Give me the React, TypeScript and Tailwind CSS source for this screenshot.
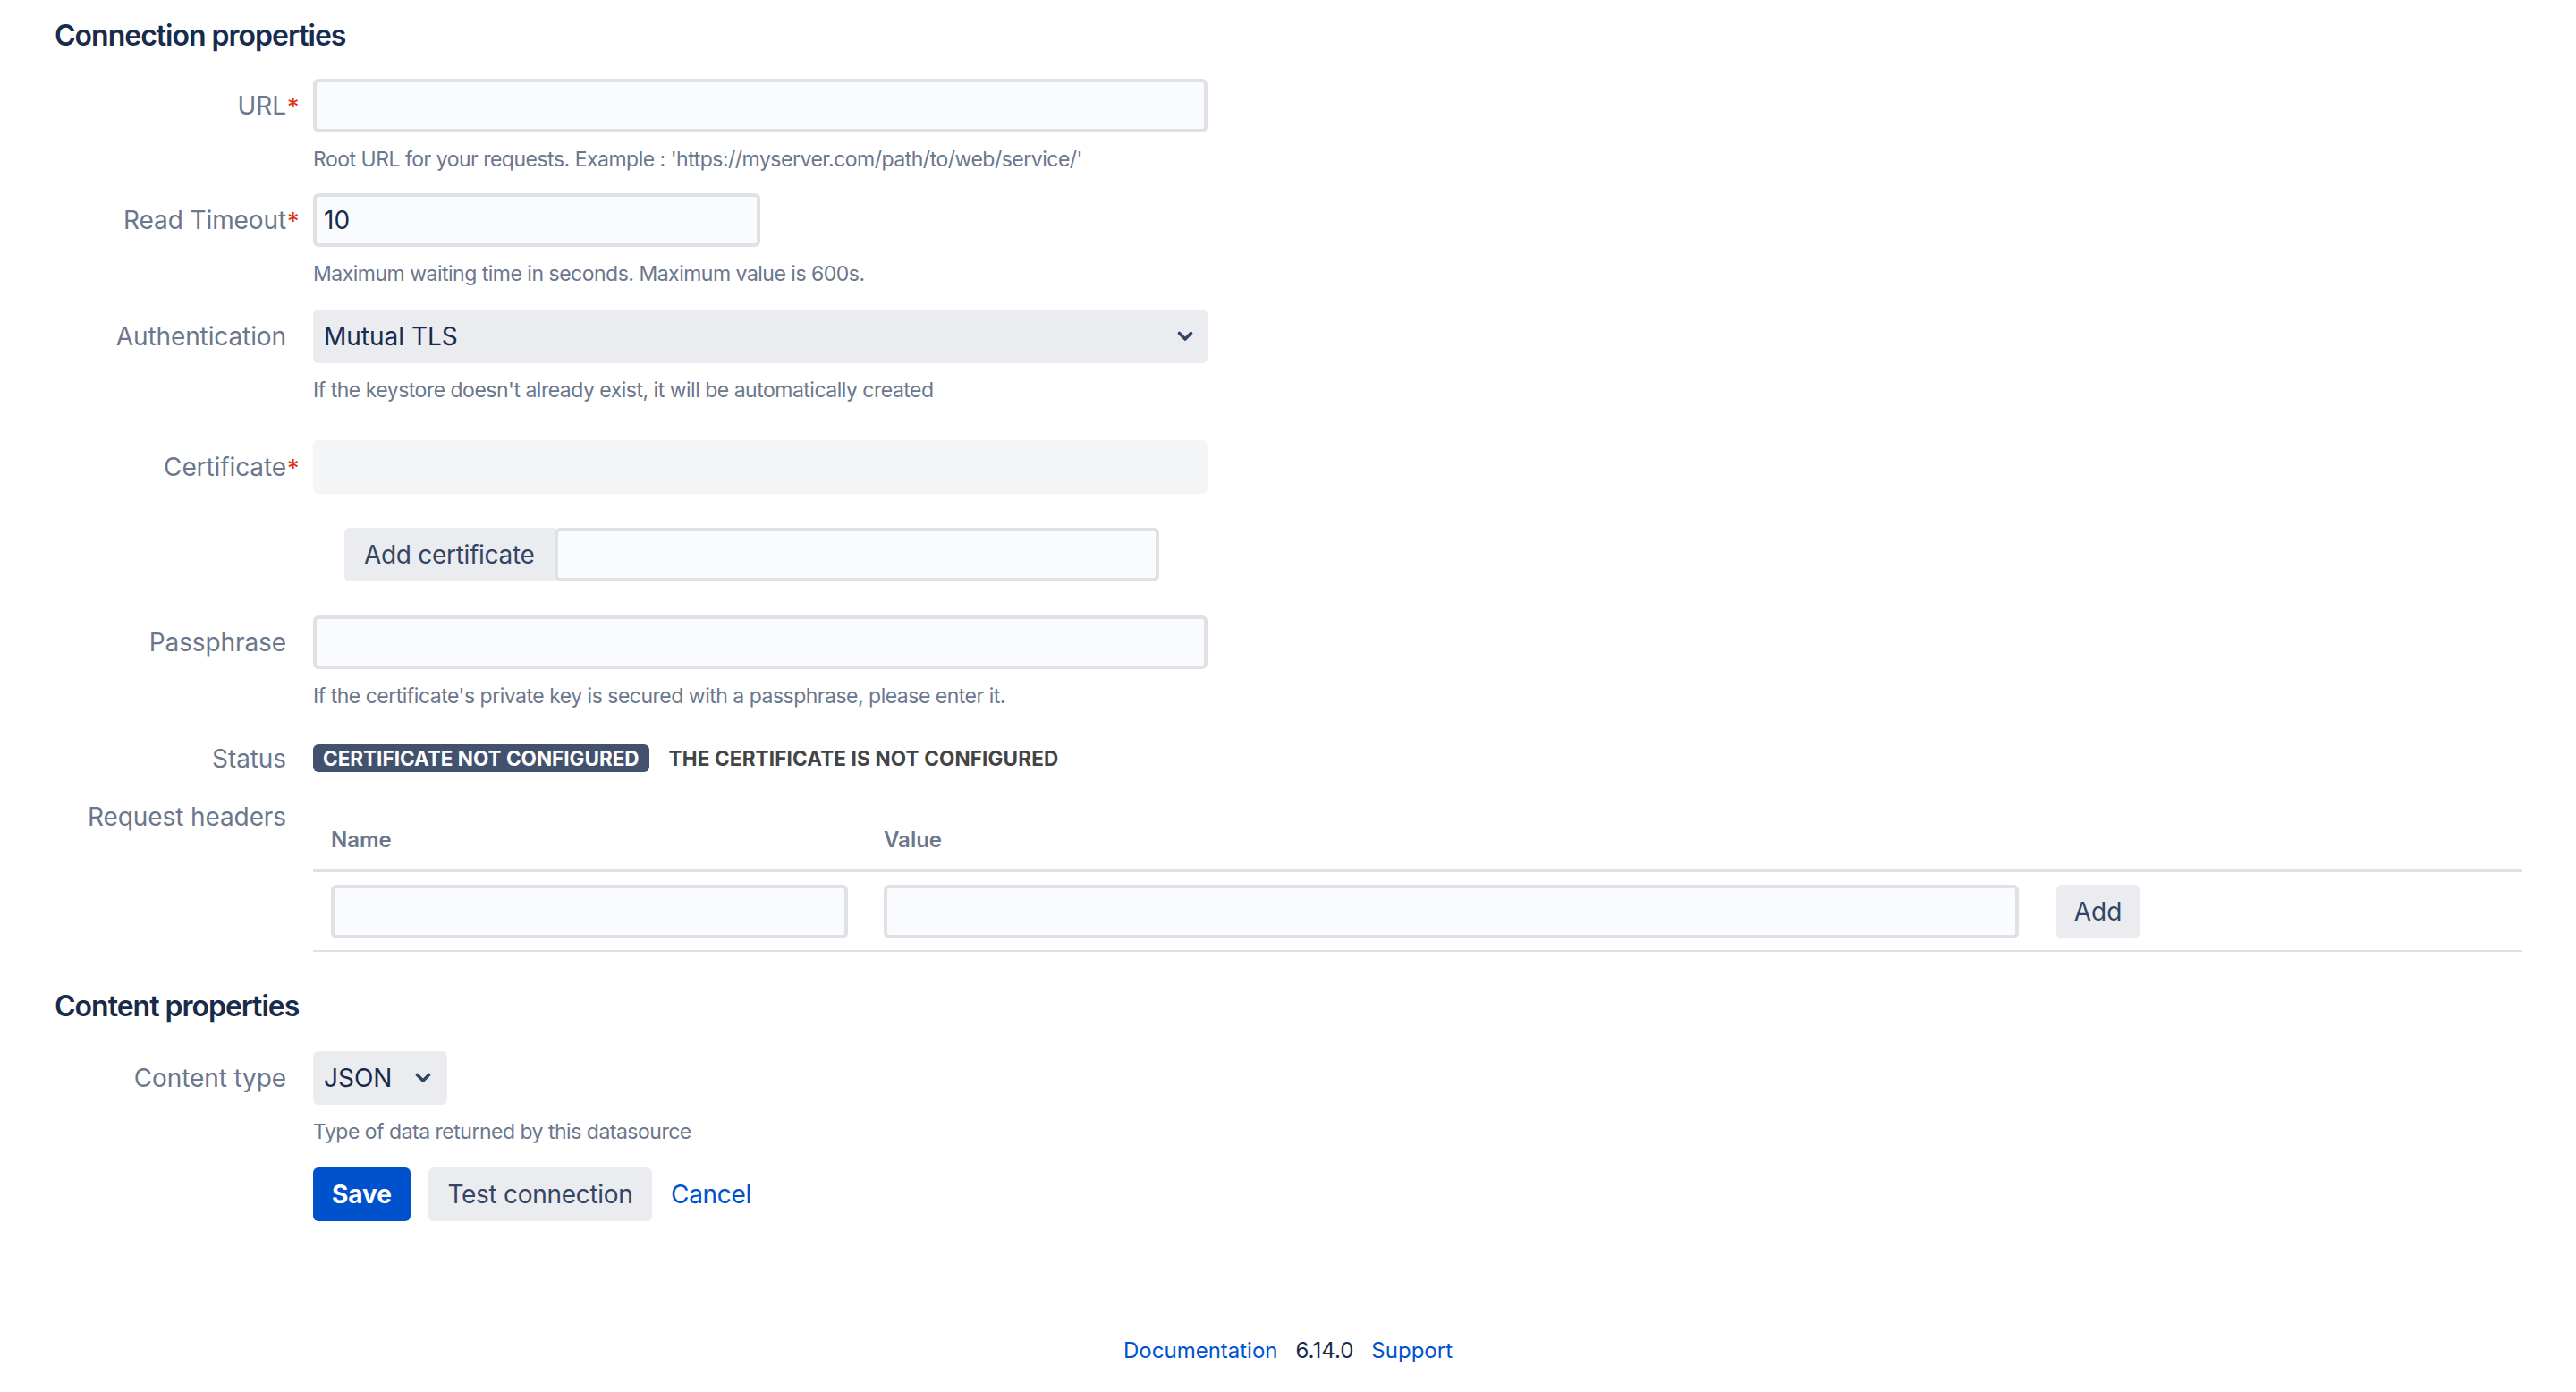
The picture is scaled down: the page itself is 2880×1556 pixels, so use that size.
import type { ReactNode } from "react";

const inputCls =
  "h-[60px] rounded-[6px] border-[4px] border-[#dfe1e6] bg-[#fafbfc] px-[8px] text-[28px] text-[#172b4d] outline-none";

function Chevron() {
  return (
    <svg width="18" height="12" viewBox="0 0 18 12" className="shrink-0">
      <polyline
        points="2.5,2.5 9,9 15.5,2.5"
        fill="none"
        stroke="#344563"
        strokeWidth="3.6"
        strokeLinecap="round"
        strokeLinejoin="round"
      />
    </svg>
  );
}

function Field({
  label,
  required,
  children,
  className,
}: {
  label?: string;
  required?: boolean;
  children: ReactNode;
  className?: string;
}) {
  return (
    <div className={"flex items-center " + (className ?? "")}>
      <div className="w-[320px] shrink-0 text-right">
        <span className="relative text-[28px] leading-[40px] tracking-[-0.1px] text-[#6b778c]">
          {label}
          {required && (
            <span className="absolute left-full top-[-1px] pl-[1px] text-[27px] leading-[40px] text-[#de350b]">
              *
            </span>
          )}
        </span>
      </div>
      <div className="ml-[30px] flex items-center">{children}</div>
    </div>
  );
}

function Help({ children }: { children: ReactNode }) {
  return (
    <p className="ml-[350px] mt-[12px] text-[23px] leading-[36px] tracking-[-0.5px] text-[#6b778c]">
      {children}
    </p>
  );
}

export default function App() {
  return (
    <div className="min-h-[1556px] w-full bg-white font-['Inter',sans-serif]">
      <h2 className="ml-[61px] pt-[20px] text-[32px] font-semibold leading-[40px] tracking-[-1px] text-[#172b4d]">
        Connection properties
      </h2>

      <Field label="URL" required className="mt-[28px]">
        <input className={inputCls + " w-[1000px]"} readOnly />
      </Field>
      <Help>Root URL for your requests. Example : 'https://myserver.com/path/to/web/service/'</Help>

      <Field label="Read Timeout" required className="mt-[20px]">
        <input className={inputCls + " w-[500px]"} defaultValue="10" />
      </Field>
      <Help>Maximum waiting time in seconds. Maximum value is 600s.</Help>

      <Field label="Authentication" className="mt-[22px]">
        <div className="flex h-[60px] w-[1000px] items-center justify-between rounded-[6px] bg-[#ebecf0] pl-[12px] pr-[16px] text-[28px] text-[#172b4d]">
          <span>Mutual TLS</span>
          <Chevron />
        </div>
      </Field>
      <Help>If the keystore doesn't already exist, it will be automatically created</Help>

      <Field label="Certificate" required className="mt-[38px]">
        <div className="h-[60px] w-[1000px] rounded-[6px] bg-[#f4f5f7]" />
      </Field>

      <Field className="mt-[38px]">
        <div className="ml-[35px] flex items-center">
          <button className="h-[60px] rounded-l-[6px] bg-[#ebecf0] px-[22px] text-[28px] tracking-[-0.3px] text-[#344563]">
            Add certificate
          </button>
          <input className={inputCls + " w-[676px]"} readOnly />
        </div>
      </Field>

      <Field label="Passphrase" className="mt-[38px]">
        <input className={inputCls + " w-[1000px]"} readOnly />
      </Field>
      <Help>If the certificate's private key is secured with a passphrase, please enter it.</Help>

      <Field label="Status" className="mt-[36px] h-[31px]">
        <span className="h-[31px] rounded-[6px] bg-[#42526e] px-[11px] text-[22.5px] font-bold leading-[31px] text-white">
          CERTIFICATE NOT CONFIGURED
        </span>
        <span className="ml-[22px] text-[22.5px] font-bold leading-[31px] tracking-[0.15px] text-[#444444]">
          THE CERTIFICATE IS NOT CONFIGURED
        </span>
      </Field>

      <div className="mt-[30px] flex items-start">
        <div className="w-[320px] shrink-0 text-right text-[28px] leading-[40px] tracking-[-0.1px] text-[#6b778c]">
          Request headers
        </div>
        <div className="ml-[30px] w-[2470px]">
          <div className="flex h-[82px] items-end border-b-[4px] border-[#dfe1e6] pb-[14px] text-[24px] font-semibold leading-[36px] text-[#6b778c]">
            <span className="ml-[20px] w-[618px]">Name</span>
            <span>Value</span>
          </div>
          <div className="flex items-center border-b-[2px] border-[#dfe1e6] pb-[13px] pt-[14px]">
            <input className={inputCls + " ml-[20px] w-[578px]"} readOnly />
            <input className={inputCls + " ml-[40px] w-[1269px]"} readOnly />
            <button className="ml-[42px] h-[60px] w-[93px] rounded-[6px] bg-[#ebecf0] text-[28px] text-[#344563]">
              Add
            </button>
          </div>
        </div>
      </div>

      <h2 className="ml-[61px] mt-[41px] text-[32px] font-semibold leading-[40px] tracking-[-1px] text-[#172b4d]">
        Content properties
      </h2>

      <Field label="Content type" className="mt-[30px]">
        <div className="flex h-[60px] w-[150px] items-center justify-between rounded-[6px] bg-[#ebecf0] pl-[12px] pr-[18px] text-[28px] text-[#172b4d]">
          <span>JSON</span>
          <Chevron />
        </div>
      </Field>
      <Help>Type of data returned by this datasource</Help>

      <div className="ml-[350px] mt-[22px] flex items-center">
        <button className="h-[60px] w-[109px] rounded-[6px] bg-[#0052cc] text-[28px] font-bold text-white">
          Save
        </button>
        <button className="ml-[20px] h-[60px] w-[250px] rounded-[6px] bg-[#ebecf0] text-[28px] tracking-[-0.3px] text-[#344563]">
          Test connection
        </button>
        <a className="ml-[21px] text-[28px] tracking-[-0.3px] text-[#0052cc]" href="#">
          Cancel
        </a>
      </div>

      <div className="mt-[127px] flex justify-center gap-[20px] text-[24px] leading-[36px]">
        <a className="text-[#0052cc]" href="#">
          Documentation
        </a>
        <span className="text-[#172b4d]">6.14.0</span>
        <a className="text-[#0052cc]" href="#">
          Support
        </a>
      </div>
    </div>
  );
}
